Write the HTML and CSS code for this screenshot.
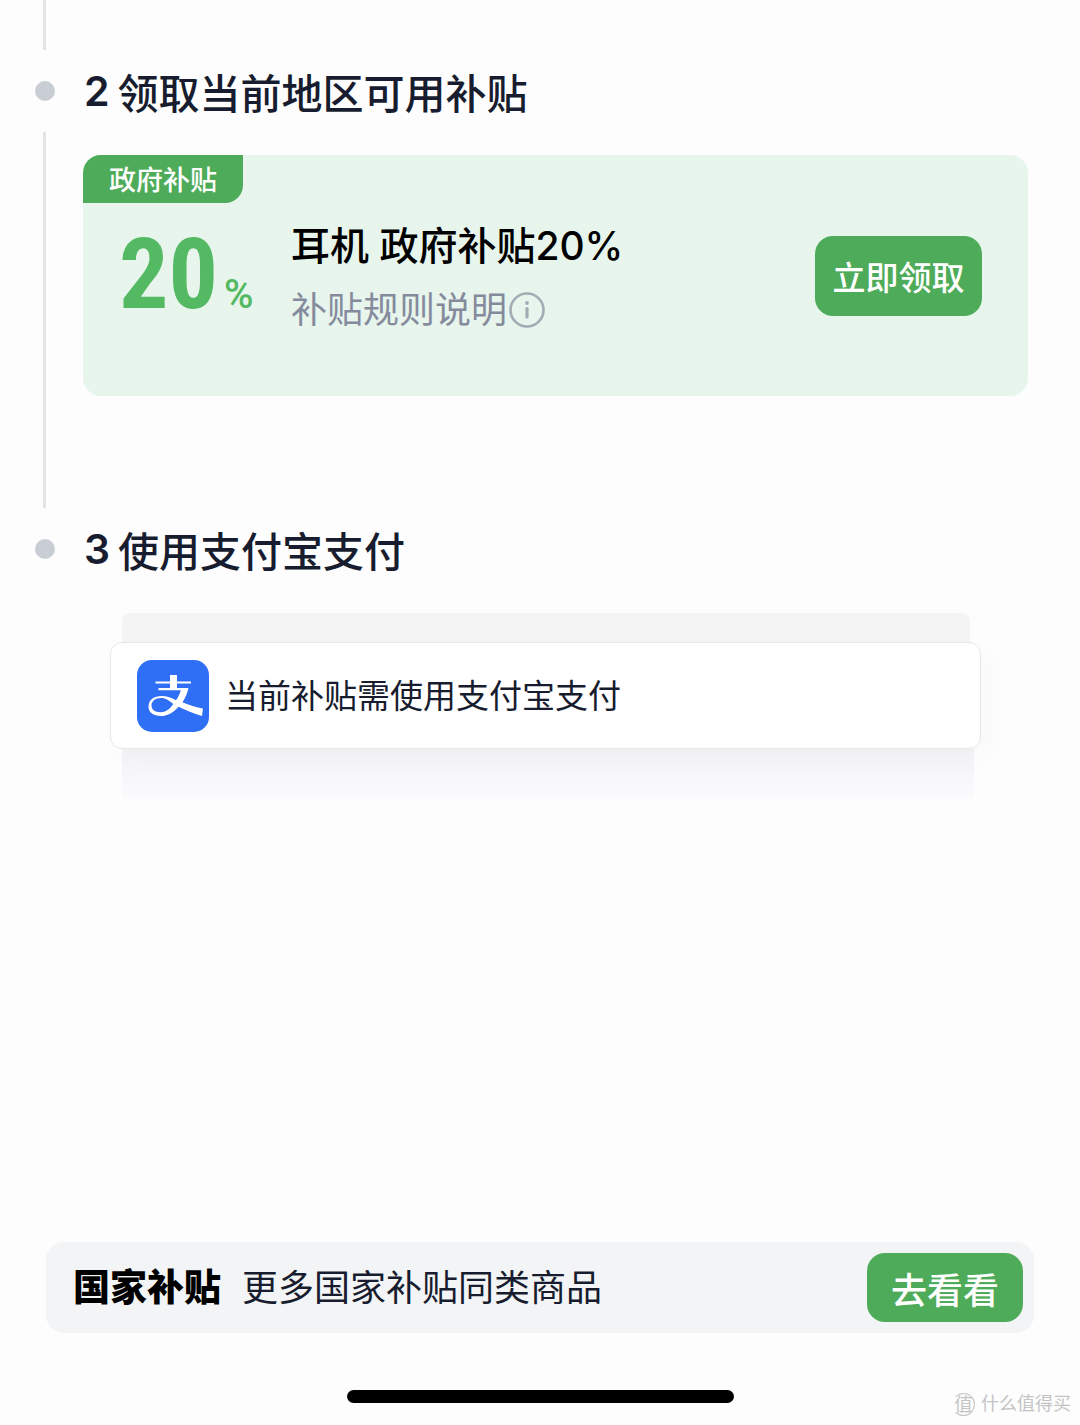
FILE: index.html
```html
<!DOCTYPE html>
<html lang="zh-CN">
<head>
    <meta charset="UTF-8">
    <meta name="viewport" content="width=device-width, initial-scale=1.0">
    <title>领取补贴</title>
    <link rel="stylesheet" href="styles.css">
</head>
<body>
    <main class="steps">
        <div class="step-tail"></div>

        <!-- Step 2 -->
        <section class="step">
            <h2 class="step-title"><span class="dot"></span><span class="num">2</span><span>领取当前地区可用补贴</span></h2>
            <div class="step-body with-line">
                <div class="coupon">
                    <span class="tag">政府补贴</span>
                    <div class="amount">20<span class="percent">%</span></div>
                    <div class="coupon-info">
                        <h3>耳机 政府补贴20%</h3>
                        <a href="#" class="rules">补贴规则说明
                            <svg class="info-icon" viewBox="0 0 36 36" fill="none" stroke="currentColor">
                                <circle cx="18" cy="18" r="16.5" stroke-width="2.6"/>
                                <path d="M18 16.500v8.500" stroke-width="3.2" stroke-linecap="round"/>
                                <circle cx="18" cy="11" r="1.900" fill="currentColor" stroke="none"/>
                            </svg>
                        </a>
                    </div>
                    <button class="btn btn-claim">立即领取</button>
                </div>
            </div>
        </section>

        <!-- Step 3 -->
        <section class="step">
            <h2 class="step-title"><span class="dot"></span><span class="num">3</span><span>使用支付宝支付</span></h2>
            <div class="step-body">
                <div class="pay-stack">
                    <div class="plate-top"></div>
                    <div class="pay-card">
                        <svg class="alipay" viewBox="0 0 72 72">
                            <rect width="72" height="72" rx="15" fill="#2f6ff5"/>
                            <g fill="#fff">
                                <path d="M33 15h7v6.500h14v2H40v4.500h11.500c-1.200 5.500-3.200 10-6 14.200 6.500 3 13.500 5.200 20.500 6.300l-1 7.500c-8.500-2.600-16.200-6-23.500-9.300-4.500 5.500-10.800 9.300-17.500 9.300-7.500 0-12.500-3.500-12.500-9.500 0-6.500 5.500-10.500 13-10.500 5.500 0 10.200 2 14.500 4.200 2.200-3 3.700-6.200 4.800-10H21.500v-2.200H33v-4.500H18.500v-2H33zM24 38c-5.500 0-9.500 3-9.500 7.500 0 4.300 3.500 6.700 9 6.700 5.200 0 9.300-3 12.800-8.200-4-3.300-7.500-6-12.300-6z"/>
                            </g>
                        </svg>
                        <span>当前补贴需使用支付宝支付</span>
                    </div>
                    <div class="plate-bottom"></div>
                </div>
            </div>
        </section>
    </main>

    <footer>
        <div class="more-bar">
            <strong>国家补贴</strong>
            <span class="more-text">更多国家补贴同类商品</span>
            <button class="btn btn-more">去看看</button>
        </div>
        <div class="home-indicator"></div>
        <div class="watermark">
            <span class="mark-logo">值</span>
            <span>什么值得买</span>
        </div>
    </footer>
</body>
</html>
```

FILE: styles.css
```css
* {
    box-sizing: border-box;
}

body {
    display: flex;
    flex-direction: column;
    min-height: 100vh;
    margin: 0;
    font-family: Inter, "Noto Sans CJK SC", sans-serif;
    color: #171c2e;
    background-color: #fdfdfd;
}

h2, h3 {
    margin: 0;
}

.step-tail {
    height: 50px;
    margin-left: 43px;
    border-left: 3px solid #e2e4e6;
}

.step-title {
    display: flex;
    align-items: center;
    gap: 8px;
    height: 82px;
    padding-left: 35px;
    font-size: 41px;
    font-weight: 500;
}

.num {
    font-weight: 600;
}

.dot {
    width: 20px;
    height: 20px;
    margin-right: 21px;
    border-radius: 50%;
    background-color: #c9ced4;
}

.step-body {
    margin-left: 43px;
    padding: 23px 52px 0 40px;
}

.with-line {
    padding: 23px 52px 112px 37px;
    border-left: 3px solid #e2e4e6;
}

/* Coupon card */
.coupon {
    position: relative;
    display: flex;
    align-items: center;
    height: 241px;
    padding: 0 46px 0 36px;
    border-radius: 18px;
    background-color: #e7f5ec;
}

.tag {
    position: absolute;
    top: 0;
    left: 0;
    padding: 4px 26px 0;
    border-radius: 18px 0;
    font-size: 27px;
    font-weight: 500;
    line-height: 44px;
    color: white;
    background-color: #4eab59;
}

.amount {
    width: 172px;
    padding-top: 18px;
    font-family: "Roboto Condensed", Roboto, sans-serif;
    font-size: 98px;
    font-weight: bold;
    line-height: 100px;
    color: #54b963;
}

.percent {
    margin-left: 6px;
    font-family: Roboto, sans-serif;
    font-size: 40px;
    font-weight: 500;
}

.coupon-info {
    flex: 1;
    padding-top: 4px;
}

.coupon-info h3 {
    font-size: 39px;
    font-weight: 500;
    line-height: 64px;
    color: black;
}

.rules {
    display: flex;
    align-items: center;
    gap: 2px;
    font-size: 36px;
    line-height: 64px;
    color: #858b9c;
    text-decoration: none;
}

.info-icon {
    width: 36px;
    height: 36px;
    color: #a3abb5;
}

.btn {
    padding: 0;
    border: none;
    border-radius: 18px;
    font-family: inherit;
    font-weight: 500;
    color: white;
    background-color: #4eab59;
    cursor: pointer;
}

.btn-claim {
    width: 167px;
    height: 80px;
    font-size: 33px;
}

/* Alipay card */
.pay-stack {
    padding: 0 47px 0 27px;
}

.plate-top {
    height: 29px;
    margin: 0 11px 0 12px;
    border-radius: 8px 8px 0 0;
    background-color: #f4f4f4;
}

.pay-card {
    position: relative;
    display: flex;
    align-items: center;
    gap: 16px;
    height: 107px;
    padding: 0 26px;
    border: 1px solid #e6e7ea;
    border-radius: 12px;
    font-size: 33px;
    line-height: 40px;
    background-color: white;
    box-shadow: 10px 10px 30px rgba(0, 0, 0, 0.02);
}

.alipay {
    width: 72px;
    height: 72px;
}

.plate-bottom {
    height: 50px;
    margin: 0 7px 0 12px;
    background: linear-gradient(#f3f3f6, #fbfbfd);
}

/* Bottom bar */
footer {
    margin-top: auto;
    padding: 0 46px 22px;
}

.more-bar {
    display: flex;
    align-items: center;
    height: 91px;
    padding: 0 11px 0 27px;
    border-radius: 18px;
    line-height: 42px;
    background-color: #f3f4f6;
}

.more-bar strong {
    font-size: 37px;
    font-weight: 900;
    color: black;
}

.more-text {
    flex: 1;
    margin-left: 21px;
    font-size: 36px;
}

.btn-more {
    width: 156px;
    height: 69px;
    font-size: 36px;
}

.home-indicator {
    width: 387px;
    height: 13px;
    margin: 57px auto 0;
    border-radius: 7px;
    background-color: black;
}

.watermark {
    position: absolute;
    right: 9px;
    bottom: 8px;
    display: flex;
    align-items: center;
    gap: 6px;
    font-size: 18px;
    line-height: 26px;
    color: #c4c4c4;
}

.mark-logo {
    width: 23px;
    height: 23px;
    border: 1px solid #c4c4c4;
    border-left-color: transparent;
    border-radius: 50%;
    line-height: 21px;
    text-align: center;
}
```
